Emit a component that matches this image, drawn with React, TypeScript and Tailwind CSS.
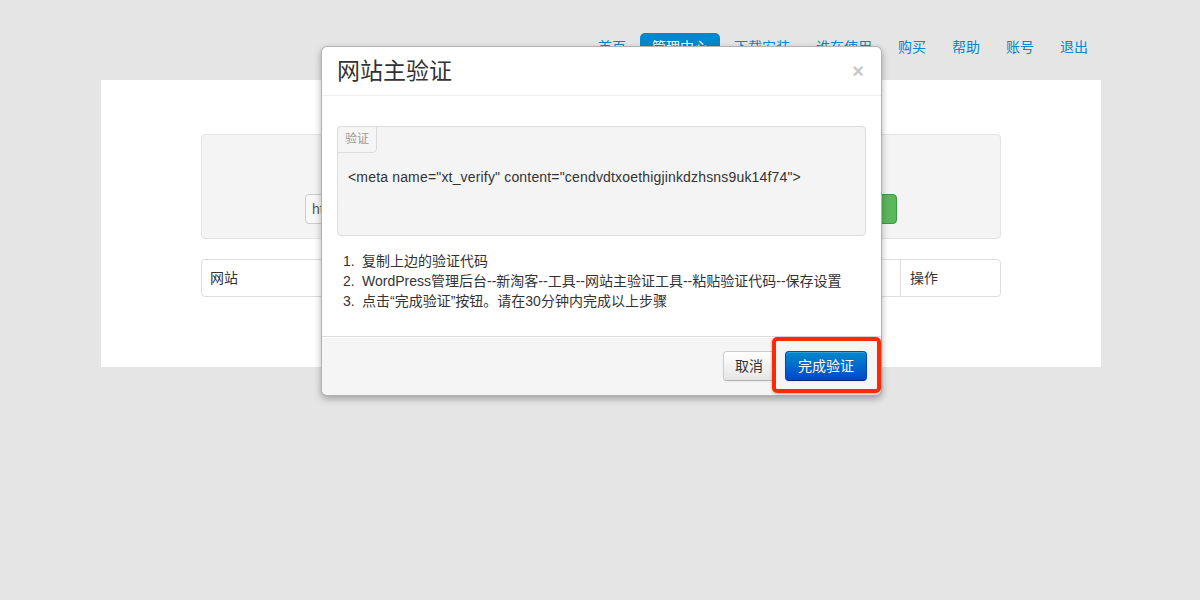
const navItems = ["首页", "管理中心", "下载安装", "谁在使用", "购买", "帮助", "账号", "退出"];

const steps = [
  "复制上边的验证代码",
  "WordPress管理后台--新淘客--工具--网站主验证工具--粘贴验证代码--保存设置",
  "点击“完成验证”按钮。请在30分钟内完成以上步骤",
];

export default function App() {
  return (
    <div
      className="relative h-[600px] w-[1200px] overflow-hidden bg-[#e5e5e5] text-[14px] leading-[20px] text-[#333]"
      style={{ fontFamily: '"Liberation Sans", "Noto Sans CJK SC", sans-serif' }}
    >
      {/* top nav */}
      <div className="mx-auto flex h-[80px] w-[1000px] items-start justify-end pt-[33px]">
        <ul className="flex gap-[2px]">
          {navItems.map((item) => (
            <li
              key={item}
              className={
                item === "管理中心"
                  ? "rounded-t-[5px] bg-[#0088cc] px-[12px] pt-[4px] pb-[12px] text-white"
                  : "px-[12px] pt-[4px] text-[#0088cc]"
              }
            >
              {item}
            </li>
          ))}
        </ul>
      </div>

      {/* main panel */}
      <div className="ml-[101px] h-[287px] w-[1000px] bg-white px-[100px] pt-[54px]">
        <div className="flex h-[105px] items-end gap-[4px] rounded-[4px] border border-[#e3e3e3] bg-[#f4f4f4] pb-[14px] pl-[103px]">
          <div className="h-[30px] w-[520px] rounded-[4px] border border-[#ccc] bg-[#f8f8f8] px-[6px] py-[4px] text-[#555]">
            http://
          </div>
          <div className="h-[30px] w-[68px] rounded-[4px] border border-[#3c9a3c] bg-[#5bb75b]" />
        </div>
        <div className="mt-[20px] flex h-[38px] rounded-[4px] border border-[#ddd]">
          <div className="flex-1 px-[8px] py-[8px]">网站</div>
          <div className="w-[100px] border-l border-[#ddd] px-[9px] py-[8px]">操作</div>
        </div>
      </div>

      {/* modal */}
      <div className="absolute left-[321px] top-[46px] w-[561px] rounded-[6px] border border-[rgba(0,0,0,0.3)] bg-white shadow-[0_3px_7px_rgba(0,0,0,0.3)]">
        <div className="flex items-center justify-between border-b border-[#eee] px-[15px] py-[9px]">
          <h3 className="text-[23px] leading-[30px] font-normal text-[#333]">网站主验证</h3>
          <span className="mr-[2px] text-[20px] leading-[20px] font-bold text-[#c8c8c8]">×</span>
        </div>

        <div className="px-[15px] pt-[30px] pb-[15px]">
          <div className="relative h-[110px] rounded-[4px] border border-[#ddd] bg-[#f4f4f4] px-[10px] pt-[40px]">
            <span className="absolute left-[-1px] top-[-1px] rounded-tl-[4px] rounded-br-[4px] border border-[#ddd] bg-[#f5f5f5] px-[7px] py-[3px] text-[12px] leading-[19px] text-[#9a9a9a]">
              验证
            </span>
            <p className="tracking-[0.17px]">
              &lt;meta name="xt_verify" content="cendvdtxoethigjinkdzhsns9uk14f74"&gt;
            </p>
          </div>
          <ol className="mt-[15px] mb-[10px]">
            {steps.map((s, i) => (
              <li key={s} className="flex pl-[6px]">
                <span className="w-[19px] shrink-0">{i + 1}.</span>
                <span>{s}</span>
              </li>
            ))}
          </ol>
        </div>

        <div className="flex justify-end gap-[10px] rounded-b-[6px] border-t border-[#ddd] bg-[#f5f5f5] pl-[15px] pr-[14px] pt-[14px] pb-[14px] shadow-[inset_0_1px_0_#fff]">
          <button className="h-[30px] w-[52px] rounded-[4px] border border-[#ccc] border-b-[#b3b3b3] bg-gradient-to-b from-white to-[#e6e6e6] text-[#333] shadow-[inset_0_1px_0_rgba(255,255,255,0.2),0_1px_2px_rgba(0,0,0,0.05)]">
            取消
          </button>
          <button className="h-[30px] w-[82px] rounded-[4px] border border-[#0044cc] border-b-[#002a80] bg-gradient-to-b from-[#0088cc] to-[#0044cc] text-white shadow-[inset_0_1px_0_rgba(255,255,255,0.2),0_1px_2px_rgba(0,0,0,0.05)]">
            完成验证
          </button>
        </div>
      </div>

      {/* highlight box */}
      <div className="absolute left-[772px] top-[337px] h-[56px] w-[109px] rounded-[5px] border-[4px] border-[#fa2a05] shadow-[0_1px_3px_rgba(0,0,0,0.3)]" />
    </div>
  );
}
